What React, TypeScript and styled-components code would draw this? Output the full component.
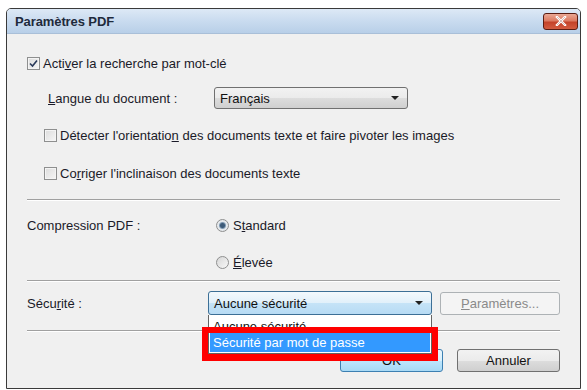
import React from 'react';
import styled, { createGlobalStyle } from 'styled-components';

const GlobalStyle = createGlobalStyle`
  html, body {
    margin: 0;
    padding: 0;
    background: #ffffff;
  }
  body {
    font-family: "Liberation Sans", Arial, sans-serif;
    font-size: 13px;
    color: #1a1a28;
  }
`;

const Page = styled.div`
  width: 587px;
  height: 390px;
  padding: 8px 0 0 6px;
  box-sizing: border-box;
`;

const Window = styled.div`
  width: 575px;
  height: 381px;
  box-sizing: border-box;
  border: 1px solid #3a3a3a;
  border-radius: 5px 5px 0 0;
  background: #f0f0f0;
  display: flex;
  flex-direction: column;
  overflow: hidden;
`;

const TitleBar = styled.div`
  height: 24px;
  flex: none;
  display: flex;
  align-items: center;
  justify-content: space-between;
  padding: 0 2px 0 8px;
  background: linear-gradient(to bottom, #dde9f6 0%, #c9dbef 50%, #b8cfe8 100%);
  border-bottom: 1px solid #a9bfd8;
`;

const Title = styled.span`
  font-size: 13px;
  font-weight: bold;
  color: #1e2a3c;
  letter-spacing: -0.1px;
`;

const CloseButton = styled.div`
  width: 35px;
  height: 17px;
  box-sizing: border-box;
  border: 1px solid #5a1d12;
  border-radius: 3px;
  background: linear-gradient(to bottom, #eaa894 0%, #dc7b62 45%, #c4432a 55%, #d35c40 100%);
  display: flex;
  align-items: center;
  justify-content: center;
`;

const Content = styled.div`
  flex: 1;
  display: flex;
  flex-direction: column;
  padding: 0 20px;
`;

const Row = styled.div<{ $top: number; $height: number; $indent?: number }>`
  display: flex;
  align-items: center;
  margin-top: ${(p) => p.$top}px;
  height: ${(p) => p.$height}px;
  padding-left: ${(p) => p.$indent ?? 0}px;
  flex: none;
`;

const Label = styled.span<{ $width?: number }>`
  width: ${(p) => (p.$width ? `${p.$width}px` : 'auto')};
  flex: none;
  white-space: nowrap;
  letter-spacing: 0;
`;

const Key = styled.span`
  text-decoration: underline;
`;

const Box = styled.span`
  width: 13px;
  height: 13px;
  box-sizing: border-box;
  border: 1px solid #8e8f8f;
  background: linear-gradient(135deg, #dcdcdc 0%, #f6f6f6 100%);
  box-shadow: inset 0 0 0 1px #f4f4f4;
  display: inline-flex;
  align-items: center;
  justify-content: center;
  margin-right: 3px;
  flex: none;
`;

const Radio = styled.span<{ $on?: boolean }>`
  width: 13px;
  height: 13px;
  box-sizing: border-box;
  border-radius: 50%;
  border: 1px solid #8e8f8f;
  background: ${(p) =>
    p.$on
      ? 'radial-gradient(circle, #3c5a78 0 2px, #7f9ab3 3px, #e4e8ec 4px)'
      : 'linear-gradient(135deg, #d6d6d6 0%, #f8f8f8 100%)'};
  margin-right: 4px;
  flex: none;
`;

const Select = styled.div<{ $width: number; $height: number; $focus?: boolean }>`
  position: relative;
  width: ${(p) => p.$width}px;
  height: ${(p) => p.$height}px;
  box-sizing: border-box;
  border: 1px solid ${(p) => (p.$focus ? '#3c6f96' : '#707070')};
  border-radius: 3px;
  background: ${(p) =>
    p.$focus
      ? 'linear-gradient(to bottom, #f3f9fd 0%, #e1f0fa 50%, #c5e3f7 51%, #b7dbf4 100%)'
      : 'linear-gradient(to bottom, #f2f2f2 0%, #ebebeb 50%, #dddddd 51%, #cfcfcf 100%)'};
  display: flex;
  align-items: center;
  justify-content: space-between;
  padding: 0 8px 0 5px;
  color: #111;
`;

const Arrow = styled.span`
  width: 0;
  height: 0;
  border-left: 4px solid transparent;
  border-right: 4px solid transparent;
  border-top: 4px solid #222;
`;

const Separator = styled.div<{ $top: number }>`
  margin-top: ${(p) => p.$top}px;
  height: 1px;
  background: #a0a0a0;
  border-bottom: 1px solid #ffffff;
  flex: none;
`;

const Button = styled.div<{ $width: number; $variant?: 'default' | 'disabled' }>`
  width: ${(p) => p.$width}px;
  height: 23px;
  box-sizing: border-box;
  border-radius: 3px;
  border: 1px solid
    ${(p) => (p.$variant === 'default' ? '#3c7fb1' : p.$variant === 'disabled' ? '#adb2b5' : '#707070')};
  background: ${(p) =>
    p.$variant === 'disabled'
      ? '#f4f4f4'
      : p.$variant === 'default'
      ? 'linear-gradient(to bottom, #eaf6fd 0%, #d9f0fc 50%, #bee6fd 51%, #a7d9f5 100%)'
      : 'linear-gradient(to bottom, #f2f2f2 0%, #ebebeb 50%, #dddddd 51%, #cfcfcf 100%)'};
  color: ${(p) => (p.$variant === 'disabled' ? '#8a8a8a' : '#111')};
  display: flex;
  align-items: center;
  justify-content: center;
  flex: none;
`;

const SecurityGroup = styled.div`
  position: relative;
  display: flex;
  align-items: center;
  gap: 8px;
`;

const DropList = styled.div`
  position: absolute;
  top: 24px;
  left: 0;
  width: 224px;
  box-sizing: border-box;
  border: 1px solid #646464;
  border-top: none;
  background: #ffffff;
  padding: 0 1px 1px;
  z-index: 2;
`;

const ListItem = styled.div<{ $selected?: boolean; $height: number; $pad?: number }>`
  height: ${(p) => p.$height}px;
  box-sizing: border-box;
  display: flex;
  align-items: center;
  padding: ${(p) => p.$pad ?? 0}px 0 0 3px;
  background: ${(p) => (p.$selected ? '#3399ff' : 'transparent')};
  color: ${(p) => (p.$selected ? '#ffffff' : '#111')};
`;

const Highlight = styled.div`
  position: absolute;
  top: 36px;
  left: -6px;
  width: 236px;
  height: 34px;
  box-sizing: border-box;
  border: 6px solid #ff0000;
  border-bottom-width: 7px;
  z-index: 3;
`;

const Footer = styled.div`
  margin-top: 17px;
  display: flex;
  justify-content: flex-end;
  gap: 14px;
`;

const Check = () => (
  <svg width="9" height="9" viewBox="0 0 9 9">
    <path d="M1 4.5 L3.5 7 L8 1.5" fill="none" stroke="#2a3a5a" strokeWidth="1.6" />
  </svg>
);

const CloseX = () => (
  <svg width="12" height="10" viewBox="0 0 12 10">
    <path d="M2 1 L10 9 M10 1 L2 9" stroke="#ffffff" strokeWidth="2.4" strokeLinecap="square" />
    <path d="M2 1 L10 9 M10 1 L2 9" stroke="#7a2a1c" strokeWidth="0.6" opacity="0.5" />
  </svg>
);

const App: React.FC = () => {
  return (
    <>
      <GlobalStyle />
      <Page>
        <Window>
          <TitleBar>
            <Title>Paramètres PDF</Title>
            <CloseButton>
              <CloseX />
            </CloseButton>
          </TitleBar>
          <Content>
            <Row $top={19} $height={20}>
              <Box>
                <Check />
              </Box>
              <Label>
                Acti<Key>v</Key>er la recherche par mot-clé
              </Label>
            </Row>
            <Row $top={14} $height={22} $indent={21}>
              <Label $width={166}>
                <Key>L</Key>angue du document :
              </Label>
              <Select $width={194} $height={22}>
                <span>Français</span>
                <Arrow />
              </Select>
            </Row>
            <Row $top={16} $height={20} $indent={17}>
              <Box />
              <Label>
                Détecter l'orientatio<Key>n</Key> des documents texte et faire pivoter les images
              </Label>
            </Row>
            <Row $top={18} $height={20} $indent={17}>
              <Box />
              <Label>
                Co<Key>r</Key>riger l'inclinaison des documents texte
              </Label>
            </Row>
            <Separator $top={16} />
            <Row $top={14} $height={20}>
              <Label $width={189}>Compression PDF :</Label>
              <Radio $on />
              <Label>
                S<Key>t</Key>andard
              </Label>
            </Row>
            <Row $top={17} $height={20} $indent={189}>
              <Radio />
              <Label>
                <Key>É</Key>levée
              </Label>
            </Row>
            <Separator $top={8} />
            <Row $top={9} $height={24}>
              <Label $width={181}>
                Sécu<Key>r</Key>ité :
              </Label>
              <SecurityGroup>
                <Select $width={224} $height={24} $focus>
                  <span>Aucune sécurité</span>
                  <Arrow />
                </Select>
                <Button $width={120} $variant="disabled">
                  <span>
                    <Key>P</Key>aramètres...
                  </span>
                </Button>
                <DropList>
                  <ListItem $height={18} $pad={5}>
                    Aucune sécurité
                  </ListItem>
                  <ListItem $height={19} $selected>
                    Sécurité par mot de passe
                  </ListItem>
                </DropList>
                <Highlight />
              </SecurityGroup>
            </Row>
            <Separator $top={15} />
            <Footer>
              <Button $width={103} $variant="default">
                OK
              </Button>
              <Button $width={103}>Annuler</Button>
            </Footer>
          </Content>
        </Window>
      </Page>
    </>
  );
};

export default App;
